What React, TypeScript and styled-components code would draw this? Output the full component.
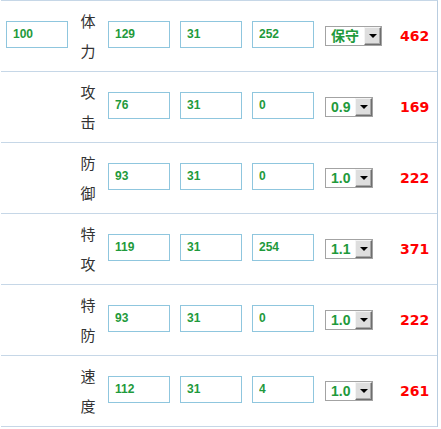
import React from "react";
import styled, { createGlobalStyle } from "styled-components";

interface Stat {
  name: [string, string];
  base?: string;
  race: string;
  iv: string;
  ev: string;
  nature: string;
  total: number;
}

const stats: Stat[] = [
  { name: ["体", "力"], base: "100", race: "129", iv: "31", ev: "252", nature: "保守", total: 462 },
  { name: ["攻", "击"], race: "76", iv: "31", ev: "0", nature: "0.9", total: 169 },
  { name: ["防", "御"], race: "93", iv: "31", ev: "0", nature: "1.0", total: 222 },
  { name: ["特", "攻"], race: "119", iv: "31", ev: "254", nature: "1.1", total: 371 },
  { name: ["特", "防"], race: "93", iv: "31", ev: "0", nature: "1.0", total: 222 },
  { name: ["速", "度"], race: "112", iv: "31", ev: "4", nature: "1.0", total: 261 },
];

const GlobalStyle = createGlobalStyle`
  body {
    margin: 0;
    background: #fff;
    font-family: "Liberation Sans", "Noto Sans CJK SC", sans-serif;
  }
`;

const Table = styled.div`
  margin-left: 1px;
  width: 436px;
  border-top: 1px solid #c6d7e7;
  border-right: 1px solid #b9cde0;
`;

const Row = styled.div`
  display: flex;
  align-items: center;
  height: 70px;
  padding-left: 5px;
  border-bottom: 1px solid #c6d7e7;
`;

const Field = styled.input<{ $gap?: number }>`
  box-sizing: border-box;
  width: 62px;
  height: 27px;
  margin: 0 ${(p) => p.$gap ?? 10}px 4px 0;
  padding: 0 0 0 6px;
  border: 1px solid #8fc6de;
  outline: none;
  background: #fff;
  color: #1f9a3c;
  font-family: "Liberation Sans", sans-serif;
  font-size: 12px;
  font-weight: bold;
`;

const Spacer = styled.div`
  width: 62px;
  flex: none;
`;

const Label = styled.div`
  width: 40px;
  flex: none;
  text-align: center;
  color: #333;
  font-family: "Noto Sans CJK SC", sans-serif;
  font-size: 15px;
  line-height: 30px;
`;

const NatureCell = styled.div`
  width: 75px;
  flex: none;
  display: flex;
  align-items: center;
`;

const Select = styled.div`
  display: inline-flex;
  align-items: stretch;
  height: 20px;
  box-sizing: border-box;
  border: 1px solid #a3a3a3;
  background: #fff;
`;

const SelectText = styled.span`
  padding: 0 5px 0 5px;
  color: #1f9a3c;
  font-family: "Liberation Sans", "Noto Sans CJK SC", sans-serif;
  font-size: 14px;
  font-weight: bold;
  line-height: 18px;
`;

const Arrow = styled.span`
  width: 17px;
  box-sizing: border-box;
  display: flex;
  align-items: center;
  justify-content: center;
  background: #dedede;
  border: 1px solid;
  border-color: #f4f4f4 #6e6e6e #6e6e6e #f4f4f4;
  box-shadow: inset -1px -1px 0 #a8a8a8;
  &::after {
    content: "";
    border-left: 4px solid transparent;
    border-right: 4px solid transparent;
    border-top: 4px solid #000;
  }
`;

const Total = styled.div`
  color: #ff0000;
  font-family: "DejaVu Sans", sans-serif;
  font-size: 14px;
  font-weight: bold;
`;

const StatRow = ({ stat }: { stat: Stat }) => (
  <Row>
    {stat.base ? <Field defaultValue={stat.base} $gap={0} /> : <Spacer />}
    <Label>
      {stat.name[0]}
      <br />
      {stat.name[1]}
    </Label>
    <Field defaultValue={stat.race} />
    <Field defaultValue={stat.iv} />
    <Field defaultValue={stat.ev} $gap={11} />
    <NatureCell>
      <Select>
        <SelectText>{stat.nature}</SelectText>
        <Arrow />
      </Select>
    </NatureCell>
    <Total>{stat.total}</Total>
  </Row>
);

export default function App() {
  return (
    <>
      <GlobalStyle />
      <Table>
        {stats.map((s) => (
          <StatRow key={s.name.join("")} stat={s} />
        ))}
      </Table>
    </>
  );
}
